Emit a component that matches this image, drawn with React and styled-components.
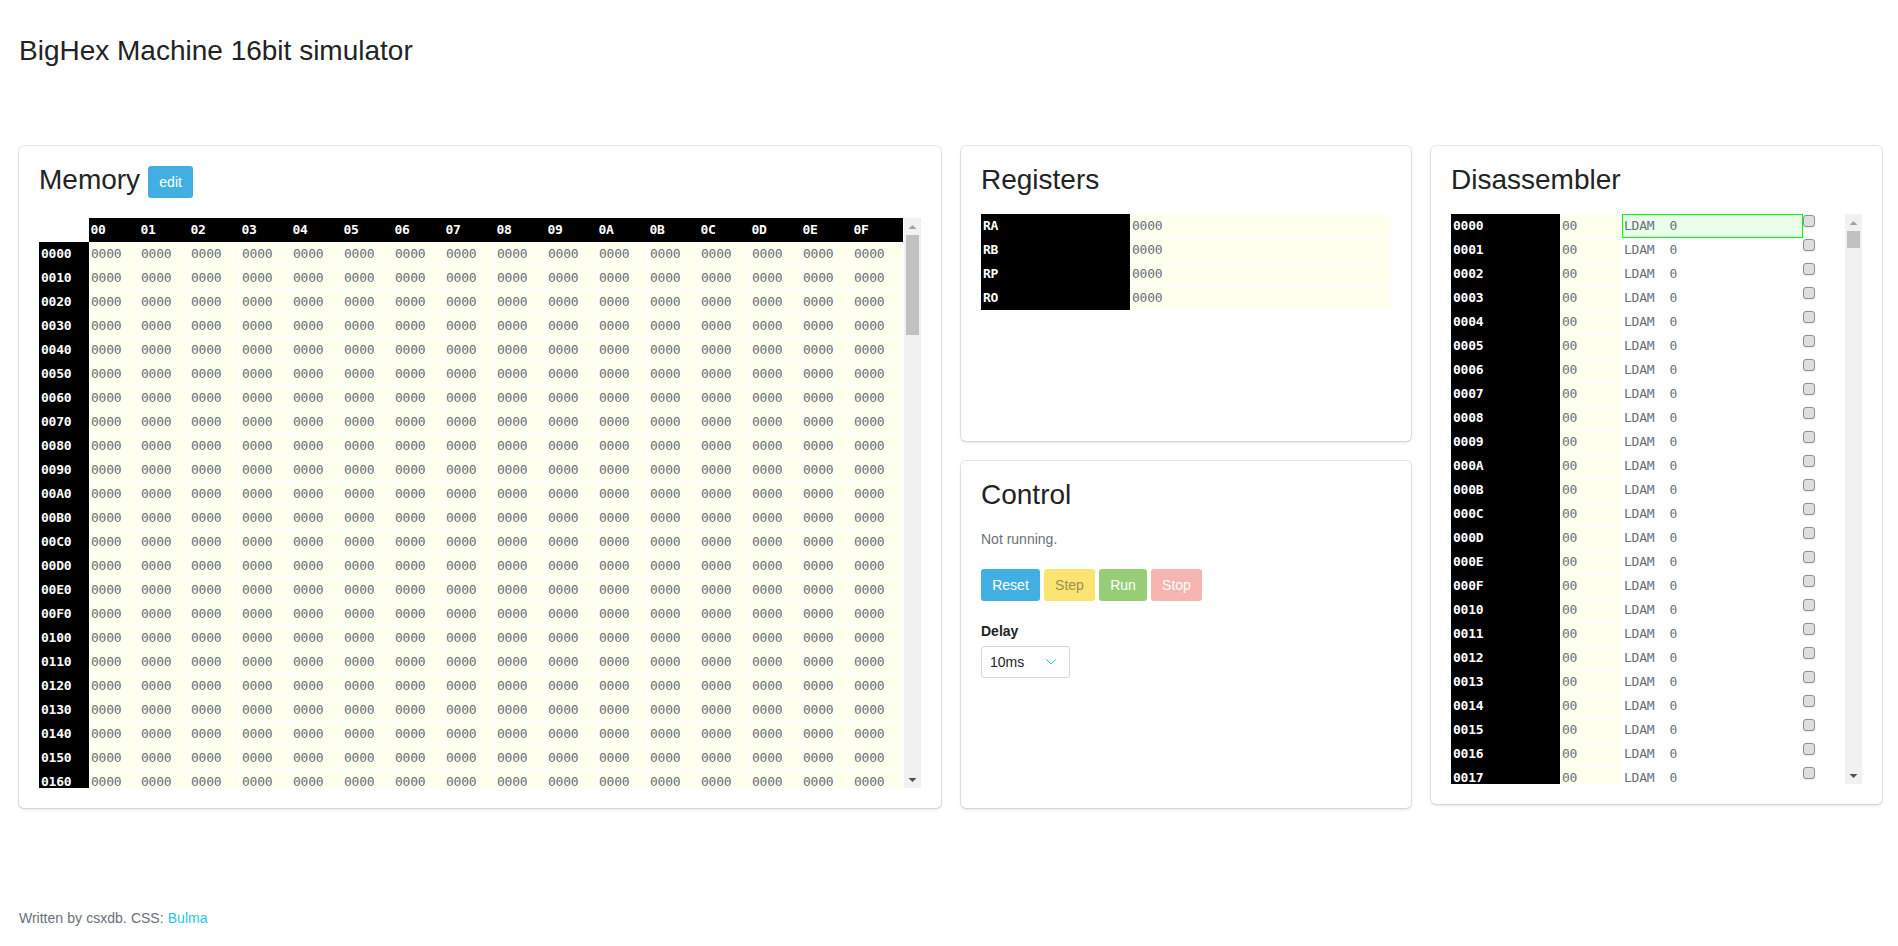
import React from 'react';
import styled, { createGlobalStyle } from 'styled-components';

const mono = `'DejaVu Sans Mono', monospace`;

const GlobalStyle = createGlobalStyle`
  html, body {
    margin: 0;
    background: #fff;
    color: #69707a;
    font-family: 'Liberation Sans', Arial, sans-serif;
    font-size: 14px;
    line-height: 20px;
  }
`;

const Page = styled.div`
  width: 1863px;
  padding: 37px 0 0 19px;
`;

const PageTitle = styled.h1`
  margin: 0 0 81px;
  font-size: 28px;
  font-weight: 300;
  line-height: 1;
  color: #222324;
`;

const Columns = styled.div`
  display: grid;
  grid-template-columns: 922px 450px 451px;
  column-gap: 20px;
  align-items: start;
`;

const Stack = styled.div`
  display: flex;
  flex-direction: column;
  gap: 20px;
  height: 662px;
`;

const Card = styled.section`
  box-sizing: border-box;
  padding: 20px;
  background: #fff;
  border-radius: 5px;
  box-shadow: 0 2px 3px rgba(17, 17, 17, 0.1), 0 0 0 1px rgba(17, 17, 17, 0.1);
  height: ${p => p.$height || 'auto'};
  flex: ${p => (p.$grow ? 1 : 'none')};
`;

const TitleRow = styled.div`
  display: flex;
  align-items: flex-start;
  gap: 8px;
  margin-bottom: 20px;
`;

const Title = styled.h2`
  margin: ${p => (p.$flush ? '0' : '0 0 20px')};
  font-size: 28px;
  font-weight: 300;
  line-height: 28px;
  color: #222324;
`;

const Button = styled.button`
  box-sizing: border-box;
  width: ${p => p.$width}px;
  height: 32px;
  padding: 0;
  border: 0;
  border-radius: 3px;
  background: ${p => p.$bg};
  color: ${p => p.$fg || '#fff'};
  font: 14px 'Liberation Sans', Arial, sans-serif;
`;

// table plus its bar, the rows past the fold are not rendered
const Pane = styled.div`
  display: flex;
  justify-content: space-between;
  height: 570px;
  font-family: ${mono};
  font-size: 13px;
  letter-spacing: -0.23px;
  line-height: 22px;
`;

const PaneBody = styled.div`
  width: ${p => p.$width}px;
  overflow: hidden;
`;

const Bar = styled.div`
  display: flex;
  flex-direction: column;
  align-items: center;
  width: 17px;
  background: #f1f1f1;
`;

const BarArrow = styled.svg`
  flex: none;
  width: 17px;
  height: 17px;
  fill: ${p => p.$color};
`;

const BarThumb = styled.div`
  width: 13px;
  height: ${p => p.$height}px;
  background: #c1c1c1;
`;

const BarSpacer = styled.div`
  flex: 1;
`;

const MemoryRow = styled.div`
  display: grid;
  grid-template-columns: 50px 50px 50px repeat(14, 51px);
  height: 24px;
`;

const Corner = styled.div`
  background: #fff;
`;

const HeadCell = styled.div`
  background: #000;
  color: #fff;
  font-weight: 700;
  line-height: 24px;
  padding-left: ${p => p.$pad || 2}px;
`;

const ValueCell = styled.div`
  margin: 1px;
  padding-left: 1px;
  background: #ffffee;
  overflow: hidden;
  white-space: pre;
`;

const RegisterGrid = styled.div`
  display: grid;
  grid-template-columns: 149px 1fr;
  font-family: ${mono};
  font-size: 13px;
  letter-spacing: -0.23px;
  line-height: 22px;
`;

const DisasmRow = styled.div`
  display: grid;
  grid-template-columns: 109px 62px 181px 12px;
  height: 24px;
`;

const InstrCell = styled.div`
  box-sizing: border-box;
  padding-left: ${p => (p.$current ? 1 : 2)}px;
  white-space: pre;
  line-height: ${p => (p.$current ? '22px' : '24px')};
  background: ${p => (p.$current ? '#eaffea' : '#fff')};
  border: ${p => (p.$current ? '1px solid #00ff00' : '0')};
`;

const BreakBox = styled.input`
  appearance: none;
  box-sizing: border-box;
  width: 12px;
  height: 12px;
  margin: 1px 0 0;
  border: 1px solid #8f8f8f;
  border-radius: 3px;
  background: #dedede;
  box-shadow: 0 1px 1px rgba(0, 0, 0, 0.08);
`;

const Status = styled.p`
  margin: 0 0 20px;
  height: 20px;
`;

const ButtonRow = styled.div`
  display: flex;
  gap: 4px;
  margin-bottom: 20px;
`;

const Label = styled.label`
  display: block;
  margin-bottom: 5px;
  font-weight: 700;
  font-size: 14px;
  line-height: 20px;
  color: #222324;
`;

const SelectWrap = styled.div`
  position: relative;
  width: 89px;
  height: 32px;
`;

const Select = styled.select`
  appearance: none;
  box-sizing: border-box;
  width: 100%;
  height: 100%;
  padding: 0 0 0 8px;
  border: 1px solid #d3d6db;
  border-radius: 3px;
  background: #fff;
  color: #222324;
  font: 14px 'Liberation Sans', Arial, sans-serif;
`;

const Chevron = styled.svg`
  position: absolute;
  top: 13px;
  right: 14px;
  width: 10px;
  height: 6px;
  pointer-events: none;
`;

const Footer = styled.footer`
  margin-top: 100px;
  word-spacing: 0.3px;
`;

const FooterLink = styled.a`
  color: #1fc8db;
  text-decoration: none;
`;

const hex = (n, len) => n.toString(16).toUpperCase().padStart(len, '0');

const columns = Array.from({ length: 16 }, (_, i) => i);
const memoryRows = Array.from({ length: 23 }, (_, i) => i * 16);
const disasmRows = Array.from({ length: 24 }, (_, i) => i);
const registers = ['RA', 'RB', 'RP', 'RO'];

const ScrollBar = ({ thumb }) => (
  <Bar>
    <BarArrow $color='#a3a3a3' viewBox='0 0 17 17'>
      <path d='M8.5 7 L12.5 11 L4.5 11 Z' />
    </BarArrow>
    <BarThumb $height={thumb} />
    <BarSpacer />
    <BarArrow $color='#505050' viewBox='0 0 17 17'>
      <path d='M4.5 7 L12.5 7 L8.5 11 Z' />
    </BarArrow>
  </Bar>
);

const Memory = () => (
  <Card>
    <TitleRow>
      <Title $flush>Memory</Title>
      <Button $bg='#42afe3' $width={45}>edit</Button>
    </TitleRow>
    <Pane>
      <PaneBody $width={864}>
        <MemoryRow>
          <Corner />
          {columns.map(c => (
            <HeadCell key={c} $pad={1.5}>{hex(c, 2)}</HeadCell>
          ))}
        </MemoryRow>
        {memoryRows.map(addr => (
          <MemoryRow key={addr}>
            <HeadCell>{hex(addr, 4)}</HeadCell>
            {columns.map(c => (
              <ValueCell key={c}>0000</ValueCell>
            ))}
          </MemoryRow>
        ))}
      </PaneBody>
      <ScrollBar thumb={100} />
    </Pane>
  </Card>
);

const Registers = () => (
  <Card $height='295px'>
    <Title>Registers</Title>
    <RegisterGrid>
      {registers.map(r => (
        <React.Fragment key={r}>
          <HeadCell>{r}</HeadCell>
          <ValueCell>0000</ValueCell>
        </React.Fragment>
      ))}
    </RegisterGrid>
  </Card>
);

const Control = () => (
  <Card $grow>
    <Title>Control</Title>
    <Status>Not running.</Status>
    <ButtonRow>
      <Button $bg='#42afe3' $width={59}>Reset</Button>
      <Button $bg='#fce473' $fg='#9a8f50' $width={51}>Step</Button>
      <Button $bg='#97cd76' $width={48}>Run</Button>
      <Button $bg='#f6b5b1' $width={51}>Stop</Button>
    </ButtonRow>
    <Label htmlFor='delay'>Delay</Label>
    <SelectWrap>
      <Select id='delay' defaultValue='10'>
        <option value='10'>10ms</option>
        <option value='100'>100ms</option>
        <option value='1000'>1000ms</option>
      </Select>
      <Chevron viewBox='0 0 10 6' fill='none' stroke='#1fc8db' strokeWidth='1'>
        <path d='M0.5 0.5 L5 5 L9.5 0.5' />
      </Chevron>
    </SelectWrap>
  </Card>
);

const Disassembler = () => (
  <Card>
    <Title>Disassembler</Title>
    <Pane>
      <PaneBody $width={364}>
        {disasmRows.map(addr => (
          <DisasmRow key={addr}>
            <HeadCell>{hex(addr, 4)}</HeadCell>
            <ValueCell>00</ValueCell>
            <InstrCell $current={addr === 0}>LDAM  0</InstrCell>
            <BreakBox type='checkbox' />
          </DisasmRow>
        ))}
      </PaneBody>
      <ScrollBar thumb={17} />
    </Pane>
  </Card>
);

const App = () => (
  <Page>
    <GlobalStyle />
    <PageTitle>BigHex Machine 16bit simulator</PageTitle>
    <Columns>
      <Memory />
      <Stack>
        <Registers />
        <Control />
      </Stack>
      <Disassembler />
    </Columns>
    <Footer>
      Written by csxdb. CSS: <FooterLink href='#'>Bulma</FooterLink>
    </Footer>
  </Page>
);

export default App;
